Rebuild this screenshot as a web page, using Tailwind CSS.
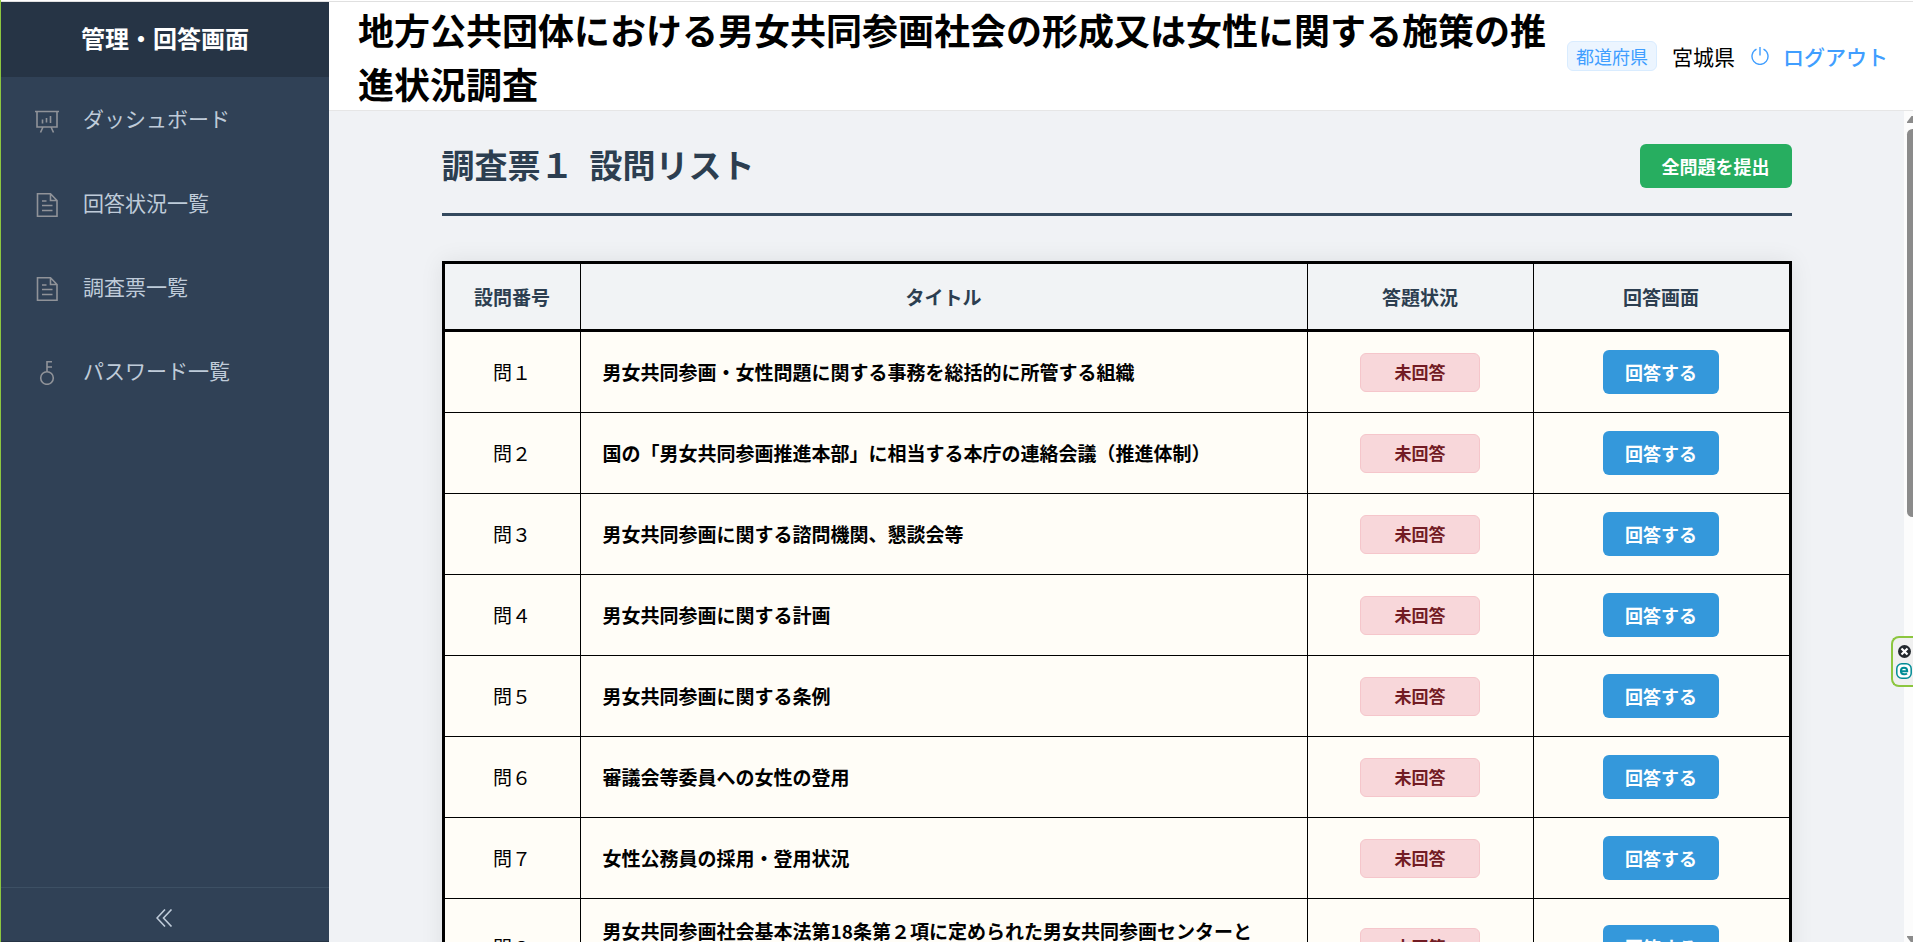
<!DOCTYPE html>
<html lang="ja">
<head>
<meta charset="utf-8">
<meta name="viewport" content="width=device-width, initial-scale=1">
<title>調査票１ 設問リスト</title>
<script src="https://cdn.jsdelivr.net/npm/@tailwindcss/browser@4"></script>
</head>
<body class="relative flex h-screen flex-col overflow-hidden border-l border-[#8cc63f] bg-white pt-px font-['Noto_Sans_CJK_JP',sans-serif] text-black">
<div class="flex min-h-0 flex-1 border-t border-[#e0e0e0]">

  <aside class="flex w-[328px] shrink-0 flex-col bg-[#304156] text-[#bfcbd9]">
    <div class="flex h-[75px] items-center justify-center bg-[#263445] pb-1 text-2xl font-bold text-white">管理・回答画面</div>
    <nav class="flex-1">
      <a href="#" class="flex h-[84px] items-center gap-6 pl-[34px] text-[21px]">
        <svg class="mt-1 size-6 shrink-0 text-[#909399]" viewBox="0 0 24 24" fill="none" stroke="currentColor" stroke-width="1.6" aria-hidden="true"><path d="M0 2.500h24M2 2.500v15.500h20V2.500M8 18l-2.500 5.500M16 18l2.500 5.500M7.500 10.500v4M11.500 9v4.500M15.500 7v7"/></svg>
        <span>ダッシュボード</span></a>
      <a href="#" class="flex h-[84px] items-center gap-6 pl-[34px] text-[21px]">
        <svg class="mt-1 size-6 shrink-0 text-[#909399]" viewBox="0 0 24 24" fill="none" stroke="currentColor" stroke-width="1.6" aria-hidden="true"><path d="M2.500 .8h13L22 7.500V23.200H2.500zM15.500 1v6.500H22M7 8h4.500M7 12.500h10.500M7 17.500h10.500"/></svg>
        <span>回答状況一覧</span></a>
      <a href="#" class="flex h-[84px] items-center gap-6 pl-[34px] text-[21px]">
        <svg class="mt-1 size-6 shrink-0 text-[#909399]" viewBox="0 0 24 24" fill="none" stroke="currentColor" stroke-width="1.6" aria-hidden="true"><path d="M2.500 .8h13L22 7.500V23.200H2.500zM15.500 1v6.500H22M7 8h4.500M7 12.500h10.500M7 17.500h10.500"/></svg>
        <span>調査票一覧</span></a>
      <a href="#" class="flex h-[84px] items-center gap-6 pl-[34px] text-[21px]">
        <svg class="mt-1 size-6 shrink-0 text-[#909399]" viewBox="0 0 24 24" fill="none" stroke="currentColor" stroke-width="1.6" aria-hidden="true"><circle cx="12" cy="17" r="6.300"/><path d="M12 10.700V.8h5M12 6h5"/></svg>
        <span>パスワード一覧</span></a>
    </nav>
    <button type="button" aria-label="メニューを閉じる" class="flex h-[55px] items-center justify-center border-y border-t-[#3d5064] border-b-[#263445] pt-1.5">
      <svg class="size-[18px]" viewBox="0 0 18 18" fill="none" stroke="currentColor" stroke-width="1.600" aria-hidden="true"><path d="M9 .5 1 9l8 8.500M15.500.5 7.500 9l8 8.500"/></svg>
    </button>
  </aside>

  <div class="flex min-w-0 flex-1 flex-col">
    <header class="flex items-start justify-between gap-5 border-b border-[#e6e6e6] bg-white pr-[25px] pl-[29px]">
      <h1 class="text-4xl leading-[54px] font-bold">地方公共団体における男女共同参画社会の形成又は女性に関する施策の推進状況調査</h1>
      <div class="flex h-[108px] shrink-0 items-center text-[21px] leading-[30px]">
        <span class="flex h-[30px] items-center rounded-md border border-[#d9ecff] bg-[#ecf5ff] px-2 text-lg text-[#409eff]">都道府県</span>
        <span class="ml-[15px]">宮城県</span>
        <a href="#" class="ml-4 flex items-center gap-[14px] font-medium text-[#409eff]">
          <svg class="size-[18px]" viewBox="0 0 18 18" fill="none" stroke="currentColor" stroke-width="1.400" aria-hidden="true"><path d="M9 0v8.500M5.500 2.200a8 8 0 1 0 7 0"/></svg>
          ログアウト</a>
      </div>
    </header>

    <div class="relative min-h-0 flex-1 overflow-hidden bg-[#f0f2f5] pr-[9px]">
      <main class="mx-auto max-w-[1350px]">
        <div class="flex h-[105px] items-center justify-between border-b-3 border-[#34495e] pt-1">
          <h2 class="text-[33px] leading-[54px] font-bold text-[#2c3e50]">調査票１<span class="pl-4">設問リスト</span></h2>
          <button type="button" class="mt-1 h-11 rounded-md bg-[#27ae60] px-[22px] text-lg font-bold text-white">全問題を提出</button>
        </div>

        <div class="mt-[45px] border-3 border-black bg-[#fffdf7] shadow-[0_0_22px_rgba(0,0,0,0.08)]">
          <table class="w-full table-fixed border-separate border-spacing-0 text-[19px] leading-8">
            <colgroup><col class="w-[136px]"><col><col class="w-[226px]"><col class="w-[255px]"></colgroup>
            <thead class="bg-[#f1f3f5] text-[#2c3e50]">
              <tr class="h-[68px]">
                <th scope="col" class="border-r border-b-3 border-black p-0">設問番号</th>
                <th scope="col" class="border-r border-b-3 border-black p-0">タイトル</th>
                <th scope="col" class="border-r border-b-3 border-black p-0">答題状況</th>
                <th scope="col" class="border-b-3 border-black p-0">回答画面</th>
              </tr>
            </thead>
            <tbody>
              <tr class="h-[81px]">
                <td class="border-r border-b border-black text-center">問１</td>
                <td class="border-r border-b border-black px-[22px] font-bold">男女共同参画・女性問題に関する事務を総括的に所管する組織</td>
                <td class="border-r border-b border-black"><span class="mx-auto flex h-[39px] w-[120px] items-center justify-center rounded-md border border-[#f5c6cb] bg-[#f8d7da] text-[17px] font-bold text-[#721c24]">未回答</span></td>
                <td class="border-b border-black text-center"><button type="button" class="block mx-auto h-11 rounded-md bg-[#3498db] px-[22px] text-lg font-bold text-white">回答する</button></td>
              </tr>
              <tr class="h-[81px]">
                <td class="border-r border-b border-black text-center">問２</td>
                <td class="border-r border-b border-black px-[22px] font-bold">国の「男女共同参画推進本部」に相当する本庁の連絡会議（推進体制）</td>
                <td class="border-r border-b border-black"><span class="mx-auto flex h-[39px] w-[120px] items-center justify-center rounded-md border border-[#f5c6cb] bg-[#f8d7da] text-[17px] font-bold text-[#721c24]">未回答</span></td>
                <td class="border-b border-black text-center"><button type="button" class="block mx-auto h-11 rounded-md bg-[#3498db] px-[22px] text-lg font-bold text-white">回答する</button></td>
              </tr>
              <tr class="h-[81px]">
                <td class="border-r border-b border-black text-center">問３</td>
                <td class="border-r border-b border-black px-[22px] font-bold">男女共同参画に関する諮問機関、懇談会等</td>
                <td class="border-r border-b border-black"><span class="mx-auto flex h-[39px] w-[120px] items-center justify-center rounded-md border border-[#f5c6cb] bg-[#f8d7da] text-[17px] font-bold text-[#721c24]">未回答</span></td>
                <td class="border-b border-black text-center"><button type="button" class="block mx-auto h-11 rounded-md bg-[#3498db] px-[22px] text-lg font-bold text-white">回答する</button></td>
              </tr>
              <tr class="h-[81px]">
                <td class="border-r border-b border-black text-center">問４</td>
                <td class="border-r border-b border-black px-[22px] font-bold">男女共同参画に関する計画</td>
                <td class="border-r border-b border-black"><span class="mx-auto flex h-[39px] w-[120px] items-center justify-center rounded-md border border-[#f5c6cb] bg-[#f8d7da] text-[17px] font-bold text-[#721c24]">未回答</span></td>
                <td class="border-b border-black text-center"><button type="button" class="block mx-auto h-11 rounded-md bg-[#3498db] px-[22px] text-lg font-bold text-white">回答する</button></td>
              </tr>
              <tr class="h-[81px]">
                <td class="border-r border-b border-black text-center">問５</td>
                <td class="border-r border-b border-black px-[22px] font-bold">男女共同参画に関する条例</td>
                <td class="border-r border-b border-black"><span class="mx-auto flex h-[39px] w-[120px] items-center justify-center rounded-md border border-[#f5c6cb] bg-[#f8d7da] text-[17px] font-bold text-[#721c24]">未回答</span></td>
                <td class="border-b border-black text-center"><button type="button" class="block mx-auto h-11 rounded-md bg-[#3498db] px-[22px] text-lg font-bold text-white">回答する</button></td>
              </tr>
              <tr class="h-[81px]">
                <td class="border-r border-b border-black text-center">問６</td>
                <td class="border-r border-b border-black px-[22px] font-bold">審議会等委員への女性の登用</td>
                <td class="border-r border-b border-black"><span class="mx-auto flex h-[39px] w-[120px] items-center justify-center rounded-md border border-[#f5c6cb] bg-[#f8d7da] text-[17px] font-bold text-[#721c24]">未回答</span></td>
                <td class="border-b border-black text-center"><button type="button" class="block mx-auto h-11 rounded-md bg-[#3498db] px-[22px] text-lg font-bold text-white">回答する</button></td>
              </tr>
              <tr class="h-[81px]">
                <td class="border-r border-b border-black text-center">問７</td>
                <td class="border-r border-b border-black px-[22px] font-bold">女性公務員の採用・登用状況</td>
                <td class="border-r border-b border-black"><span class="mx-auto flex h-[39px] w-[120px] items-center justify-center rounded-md border border-[#f5c6cb] bg-[#f8d7da] text-[17px] font-bold text-[#721c24]">未回答</span></td>
                <td class="border-b border-black text-center"><button type="button" class="block mx-auto h-11 rounded-md bg-[#3498db] px-[22px] text-lg font-bold text-white">回答する</button></td>
              </tr>
              <tr>
                <td class="border-r border-b border-black text-center">問８</td>
                <td class="border-r border-b border-black px-[22px] py-4 font-bold">男女共同参画社会基本法第18条第２項に定められた男女共同参画センターと<br>しての機能を担う施設</td>
                <td class="border-r border-b border-black"><span class="mx-auto flex h-[39px] w-[120px] items-center justify-center rounded-md border border-[#f5c6cb] bg-[#f8d7da] text-[17px] font-bold text-[#721c24]">未回答</span></td>
                <td class="border-b border-black text-center"><button type="button" class="block mx-auto h-11 rounded-md bg-[#3498db] px-[22px] text-lg font-bold text-white">回答する</button></td>
              </tr>
            </tbody>
          </table>
        </div>
      </main>

      <!-- scroll track, running past the window's right edge -->
      <div class="absolute inset-y-0 right-0 w-[9px] overflow-hidden bg-[#fcfcfc]" aria-hidden="true">
        <svg class="absolute top-[5px] left-[3px] h-[7px] w-[11px] text-[#8b8b8b]" viewBox="0 0 11 7" fill="currentColor"><path d="M4.500 0h2L11 6v1H0V6z"/></svg>
        <div class="absolute top-[18px] left-[3px] h-[388px] w-[11px] rounded-md bg-[#8b8b8b]"></div>
        <svg class="absolute -bottom-px left-[3px] h-[7px] w-[11px] text-[#8b8b8b]" viewBox="0 0 11 7" fill="currentColor"><path d="M0 0h11v1L6.500 7h-2L0 1z"/></svg>
      </div>
    </div>
  </div>
</div>

<!-- browser extension tab docked at the right edge -->
<div class="absolute top-[636px] right-0 flex h-[51px] w-[22px] flex-col items-center gap-[5px] rounded-l-lg border-2 border-r-0 border-[#8cc63f] bg-[#f0f0f0] pt-[7px] pl-[2px]" aria-hidden="true">
  <svg class="size-[13px]" viewBox="0 0 13 13"><circle cx="6.500" cy="6.500" r="6.500" fill="#23282d"/><path d="M3.500 3.500l6 6M9.500 3.500l-6 6" stroke="#fff" stroke-width="2.200"/><circle cx="6.500" cy="6.500" r="1.500" fill="#fff"/></svg>
  <svg class="size-4" viewBox="0 0 16 16" fill="none"><rect x=".8" y=".8" width="14.400" height="14.400" rx="5" fill="#fff" stroke="#008c95" stroke-width="1.500"/><path d="M5 8.200h6.200C11.200 6 10 4.800 8 4.800S4.900 6.100 4.900 8.100s1.200 3.200 3.200 3.200c1.300 0 2.200-.3 2.900-.9" stroke="#008c95" stroke-width="2"/></svg>
</div>
</body>
</html>
